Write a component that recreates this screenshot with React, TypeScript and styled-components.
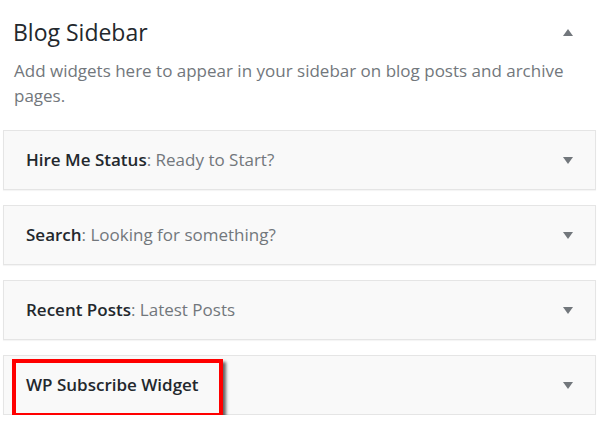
import styled, { createGlobalStyle } from 'styled-components';

const GlobalStyle = createGlobalStyle`
    body {
        margin: 0;
        background: #fff;
        font-family: 'Open Sans', 'Noto Sans', sans-serif;
    }
`;

const StyledSidebar = styled.section`
    width: 597px;
    padding: 0 1px 0 3px;
    box-sizing: border-box;
`;

const StyledHeader = styled.header`
    display: flex;
    justify-content: space-between;
    align-items: center;
    padding: 16px 23px 0 10px;
`;

const StyledTitle = styled.h2`
    margin: 0;
    font-size: 23px;
    font-weight: 400;
    line-height: 32px;
    color: #23282d;
`;

const StyledDescription = styled.p`
    margin: 10px 0 0 11px;
    font-size: 17px;
    line-height: 25px;
    color: #72777c;
`;

const StyledList = styled.ul`
    list-style: none;
    margin: 22px 0 0;
    padding: 0;
    display: flex;
    flex-direction: column;
    gap: 15px;
`;

const StyledWidget = styled.li`
    height: 60px;
    box-sizing: border-box;
    border: 1px solid #e5e5e5;
    background: #f9f9f9;
    box-shadow: 0 1px 1px rgba(0, 0, 0, 0.04);
    display: flex;
    justify-content: space-between;
    align-items: center;
    padding: 0 22px 0 22px;
`;

const StyledWidgetTitle = styled.span<{ $highlighted?: boolean }>`
    position: relative;
    font-size: 17px;
    line-height: 24px;
    font-weight: 600;
    color: #23282d;

    &::before {
        content: '';
        display: ${({ $highlighted }) => ($highlighted ? 'block' : 'none')};
        position: absolute;
        left: -14px;
        right: -24px;
        top: -14px;
        bottom: -20px;
        border: 4px solid #ff0000;
        box-shadow: 3px 3px 3px rgba(0, 0, 0, 0.6);
    }
`;

const StyledSubtitle = styled.span`
    font-weight: 400;
    color: #72777c;
`;

const StyledArrow = styled.span<{ $up?: boolean }>`
    width: 0;
    height: 0;
    border-left: 5.5px solid transparent;
    border-right: 5.5px solid transparent;
    ${({ $up }) => ($up ? 'border-bottom: 7px solid #72777c;' : 'border-top: 7px solid #72777c;')}
`;

const widgets = [
    { name: 'Hire Me Status', title: 'Ready to Start?' },
    { name: 'Search', title: 'Looking for something?' },
    { name: 'Recent Posts', title: 'Latest Posts' },
    { name: 'WP Subscribe Widget', highlighted: true },
];

function App() {
    return (
        <>
            <GlobalStyle />
            <StyledSidebar>
                <StyledHeader>
                    <StyledTitle>Blog Sidebar</StyledTitle>
                    <StyledArrow $up />
                </StyledHeader>
                <StyledDescription>
                    Add widgets here to appear in your sidebar on blog posts and archive pages.
                </StyledDescription>
                <StyledList>
                    {widgets.map((w) => (
                        <StyledWidget key={w.name}>
                            <StyledWidgetTitle $highlighted={w.highlighted}>
                                {w.name}
                                {w.title && <StyledSubtitle>: {w.title}</StyledSubtitle>}
                            </StyledWidgetTitle>
                            <StyledArrow />
                        </StyledWidget>
                    ))}
                </StyledList>
            </StyledSidebar>
        </>
    );
}

export default App;
